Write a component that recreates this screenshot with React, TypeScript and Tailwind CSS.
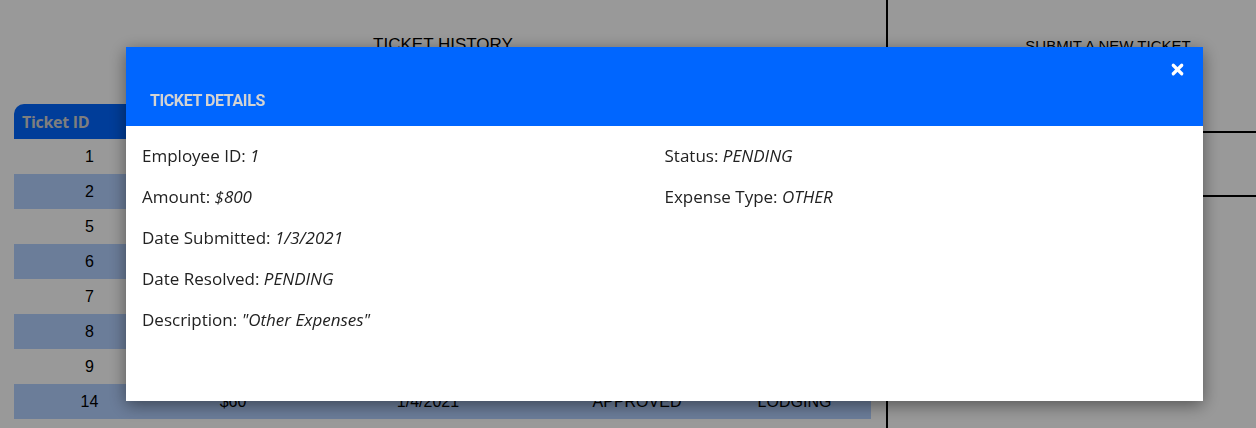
import { X } from "lucide-react";

const rows = [
  { id: 1, amount: "$300", date: "1/1/2021", status: "PENDING", type: "TRAVEL" },
  { id: 2, amount: "$120", date: "1/2/2021", status: "APPROVED", type: "FOOD" },
  { id: 5, amount: "$45", date: "1/2/2021", status: "DENIED", type: "OTHER" },
  { id: 6, amount: "$800", date: "1/3/2021", status: "PENDING", type: "OTHER" },
  { id: 7, amount: "$75", date: "1/3/2021", status: "APPROVED", type: "FOOD" },
  { id: 8, amount: "$210", date: "1/3/2021", status: "PENDING", type: "LODGING" },
  { id: 9, amount: "$32", date: "1/4/2021", status: "DENIED", type: "TRAVEL" },
  { id: 14, amount: "$60", date: "1/4/2021", status: "APPROVED", type: "LODGING" },
];

const cols = "grid grid-cols-[152px_134px_256px_162px_153px]";

function TicketTable() {
  return (
    <div className="ml-[14px] mt-[47px] w-[857px] overflow-hidden rounded-tl-[10px]">
      <div className={`${cols} h-[35px] items-center bg-[#0066ff] font-['Open_Sans',sans-serif] text-[16px] font-bold tracking-[-0.3px] text-[#d3d3d3]`}>
        <div className="pl-2">Ticket ID</div>
        <div className="text-center">Amount</div>
        <div className="text-center">Date Submitted</div>
        <div className="text-center">Status</div>
        <div className="text-center">Type</div>
      </div>
      {rows.map((r, i) => (
        <div
          key={r.id}
          className={`${cols} h-[35px] items-center text-center font-['Liberation_Sans',sans-serif] text-[16px] text-black ${
            i % 2 === 1 ? "bg-[#b3d0ff]" : "bg-white"
          }`}
        >
          <div className="pr-px">{r.id}</div>
          <div>{r.amount}</div>
          <div>{r.date}</div>
          <div>{r.status}</div>
          <div>{r.type}</div>
        </div>
      ))}
    </div>
  );
}

function Field({ label, value }: { label: string; value: string }) {
  return (
    <div className="h-6 leading-6">
      {label}: <span className="italic">{value}</span>
    </div>
  );
}

function TicketModal() {
  return (
    <div className="fixed inset-0 bg-black/40 pl-[126px] pt-[47px]">
      <div className="relative h-[354px] w-[1077px] bg-white shadow-[0_4px_16px_rgba(0,0,0,0.45)]">
        <div className="flex h-[79px] items-end bg-[#0066ff] pb-[13px] pl-6">
          <h2 className="font-['Roboto',sans-serif] text-[16px] font-bold tracking-tight text-[#d3d3d3]">
            TICKET DETAILS
          </h2>
        </div>
        <button className="absolute right-[17px] top-[14px] text-white">
          <X size={17} strokeWidth={4.5} />
        </button>
        <div className="grid grid-cols-2 px-4 pt-[18px] font-['Open_Sans',sans-serif] text-[17px] text-[#222]">
          <div className="flex flex-col gap-[17px]">
            <Field label="Employee ID" value="1" />
            <Field label="Amount" value="$800" />
            <Field label="Date Submitted" value="1/3/2021" />
            <Field label="Date Resolved" value="PENDING" />
            <Field label="Description" value={'"Other Expenses"'} />
          </div>
          <div className="flex flex-col gap-[17px]">
            <Field label="Status" value="PENDING" />
            <Field label="Expense Type" value="OTHER" />
          </div>
        </div>
      </div>
    </div>
  );
}

export default function App() {
  return (
    <div className="relative flex h-[428px] w-[1256px] overflow-hidden bg-white">
      <div className="w-[888px] shrink-0 border-r-2 border-black">
        <h1 className="pt-[33px] text-center font-['Liberation_Sans',sans-serif] text-[17px] leading-6 text-black">
          TICKET HISTORY
        </h1>
        <TicketTable />
      </div>
      <div className="w-[440px] shrink-0">
        <h1 className="pt-[34px] text-center font-['Liberation_Sans',sans-serif] text-[15px] leading-6 text-black">
          SUBMIT A NEW TICKET
        </h1>
        <div className="mt-[73px] h-[66px] border-y-2 border-black" />
      </div>
      <TicketModal />
    </div>
  );
}
